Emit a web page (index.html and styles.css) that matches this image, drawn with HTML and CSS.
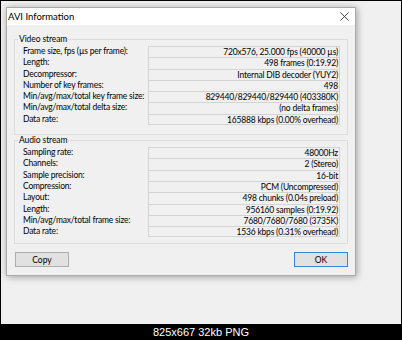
FILE: index.html
```html
<!DOCTYPE html>
<html lang="en">

<head>
    <meta charset="UTF-8">
    <meta name="viewport" content="width=device-width, initial-scale=1.0">
    <title>AVI Information</title>
    <link rel="stylesheet" href="styles.css">
</head>

<body>

    <div class="screen">
        <div class="desktop">
            <div class="dialog">
                <div class="titlebar">
                    <span class="title">AVI Information</span>
                    <svg class="close" width="10" height="10" viewBox="0 0 10 10">
                        <path d="M0.5 0.5L9.5 9.5M9.5 0.5L0.5 9.5" stroke="#333" stroke-width="1" fill="none" />
                    </svg>
                </div>

                <div class="content">
                    <!--* video -->
                    <fieldset class="group video">
                        <legend>Video stream</legend>
                        <div class="rows">
                            <span class="label">Frame size, fps (µs per frame):</span>
                            <span class="value">720x576, 25.000 fps (40000 µs)</span>
                            <span class="label">Length:</span>
                            <span class="value">498 frames (0:19.92)</span>
                            <span class="label">Decompressor:</span>
                            <span class="value">Internal DIB decoder (YUY2)</span>
                            <span class="label">Number of key frames:</span>
                            <span class="value">498</span>
                            <span class="label">Min/avg/max/total key frame size:</span>
                            <span class="value">829440/829440/829440 (403380K)</span>
                            <span class="label">Min/avg/max/total delta size:</span>
                            <span class="value">(no delta frames)</span>
                            <span class="label">Data rate:</span>
                            <span class="value last">165888 kbps (0.00% overhead)</span>
                        </div>
                    </fieldset>

                    <!--* audio -->
                    <fieldset class="group audio">
                        <legend>Audio stream</legend>
                        <div class="rows">
                            <span class="label">Sampling rate:</span>
                            <span class="value">48000Hz</span>
                            <span class="label">Channels:</span>
                            <span class="value">2 (Stereo)</span>
                            <span class="label">Sample precision:</span>
                            <span class="value">16-bit</span>
                            <span class="label">Compression:</span>
                            <span class="value">PCM (Uncompressed)</span>
                            <span class="label">Layout:</span>
                            <span class="value">498 chunks (0.04s preload)</span>
                            <span class="label">Length:</span>
                            <span class="value">956160 samples (0:19.92)</span>
                            <span class="label">Min/avg/max/total frame size:</span>
                            <span class="value">7680/7680/7680 (3735K)</span>
                            <span class="label">Data rate:</span>
                            <span class="value last">1536 kbps (0.31% overhead)</span>
                        </div>
                    </fieldset>

                    <div class="buttons">
                        <button>Copy</button>
                        <button class="default">OK</button>
                    </div>
                </div>
            </div>
        </div>

        <div class="caption">825x667 32kb PNG</div>
    </div>

</body>

</html>
```

FILE: styles.css
```css
body {
    margin: 0;
    background-color: #000;
    font-family: Lato, 'Liberation Sans', sans-serif;
}

.screen {
    width: 402px;
    height: 340px;
    display: flex;
    flex-direction: column;
}

.desktop {
    margin: 1px 1px 0 1px;
    height: 323px;
    background-color: #f0f0f0;
    padding: 6px 0 0 5px;
    box-sizing: border-box;
}

.caption {
    flex: 1;
    color: #fff;
    font-family: 'Liberation Sans', Arial, sans-serif;
    font-size: 11px;
    text-align: center;
    line-height: 16px;
}

.dialog {
    width: 350px;
    height: 269px;
    box-sizing: border-box;
    border: 1px solid #aaa;
    background-color: #f0f0f0;
    box-shadow: 1px 1px 7px rgba(0, 0, 0, 0.35);
    display: flex;
    flex-direction: column;
}

.titlebar {
    height: 17px;
    flex-shrink: 0;
    background-color: #fff;
    display: flex;
    align-items: center;
    justify-content: space-between;
    padding: 0 6px 0 1px;
}

.title {
    font-size: 9.5px;
    color: #000;
}

.close {
    width: 9px;
    height: 9px;
}

.content {
    padding: 9px 7px 0 7px;
    display: flex;
    flex-direction: column;
}

.group {
    margin: 0;
    padding: 2px 6px 9px 8px;
    border: 1px solid #dcdcdc;
    min-inline-size: 0;
}

.group.audio {
    padding-bottom: 6px;
}

.group legend {
    font-size: 8.5px;
    letter-spacing: -0.1px;
    line-height: 10px;
    padding: 0 1px;
    margin-left: -5px;
    color: #000;
}

.rows {
    display: grid;
    grid-template-columns: 125px 192px;
    grid-auto-rows: 11.3px;
    font-size: 8.5px;
    letter-spacing: -0.2px;
    color: #000;
}

.label {
    line-height: 11.3px;
    white-space: nowrap;
}

.value {
    border: 1px solid #d4d4d4;
    border-bottom: none;
    text-align: right;
    padding-right: 1px;
    line-height: 10.3px;
    white-space: nowrap;
}

.value.last {
    border-bottom: 1px solid #d4d4d4;
}

.buttons {
    display: flex;
    justify-content: space-between;
    margin-top: 7.6px;
    padding: 0 0 0 1px;
}

button {
    width: 54px;
    height: 15px;
    padding: 0;
    font-family: Lato, 'Liberation Sans', sans-serif;
    font-size: 8.5px;
    color: #000;
    background-color: #e1e1e1;
    border: 1px solid #adadad;
    border-radius: 0;
}

button.default {
    border-color: #2a8ae0;
}
```
